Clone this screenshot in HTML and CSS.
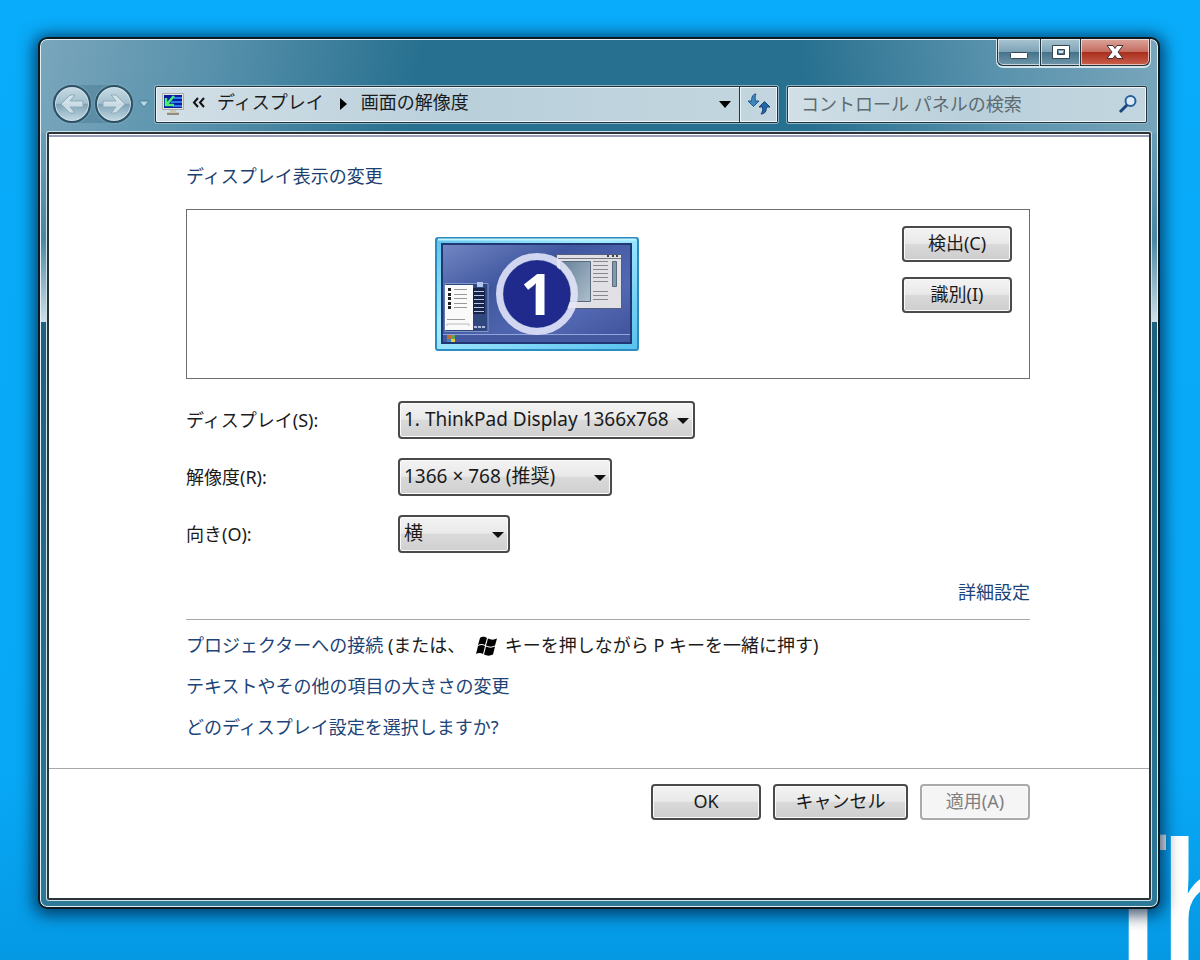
FILE: index.html
```
<!DOCTYPE html>
<html lang="ja">
<head>
  <meta charset="UTF-8">
  <meta name="viewport" content="width=device-width, initial-scale=1.0">
  <title>画面の解像度</title>
  <link rel="stylesheet" href="styles.css">
</head>
<body>
  <div class="wallpaper" aria-hidden="true">
    <span class="letter letter-t">T</span>
    <span class="letter letter-h">h</span>
  </div>

  <div class="window">
    <header>
      <div class="captions">
        <button type="button" class="cap cap-min" aria-label="最小化">
          <svg width="20" height="16" viewBox="0 0 20 16"><rect x="1.5" y="8.5" width="17" height="6" rx="1" fill="#fff" stroke="#344854"/></svg>
        </button>
        <button type="button" class="cap cap-max" aria-label="最大化">
          <svg width="20" height="16" viewBox="0 0 20 16"><path fill="#fff" fill-rule="evenodd" stroke="#344854" d="M1.500 1.500h17v13h-17zM6.500 5.500h7v5h-7z"/><path d="M8 8h4" stroke="#dbe7ee" stroke-width="2"/></svg>
        </button>
        <button type="button" class="cap cap-close" aria-label="閉じる">
          <svg width="20" height="16" viewBox="0 0 20 16"><path fill="#fff" stroke="#4c3034" d="M2 1.500h6l2 3 2-3h6l-5 6.500 5 6.500h-6l-2-3-2 3H2L7 8z"/></svg>
        </button>
      </div>

      <div class="toolbar">
        <div class="history">
          <button type="button" class="round" aria-label="戻る">
            <svg width="26" height="24" viewBox="0 0 26 24"><path fill="#dbe7ed" fill-opacity=".8" stroke="#8fabba" d="M2 12l9-9h5l-5 6h13v6H11l5 6h-5z"/></svg>
          </button>
          <button type="button" class="round" aria-label="進む">
            <svg width="26" height="24" viewBox="0 0 26 24"><path fill="#dbe7ed" fill-opacity=".8" stroke="#8fabba" d="M24 12l-9-9h-5l5 6H2v6h13l-5 6h5z"/></svg>
          </button>
        </div>
        <button type="button" class="recent" aria-label="最近のページ">
          <svg width="12" height="8" viewBox="0 0 12 8"><path fill="#b5d6e4" stroke="#4d7f98" d="M1 1h10L6 7z"/></svg>
        </button>

        <nav class="address">
          <svg class="monitor" width="22" height="23" viewBox="0 0 22 23">
            <path fill="#e6e4dc" stroke="#aaa" d="M.5.500h21v16H.5z"/>
            <path fill="#0a1c9c" d="M2 2h18v13H2z"/>
            <path stroke="#2c7cf0" stroke-width="2" d="M12 5h8M9 9h11M11 13h9"/>
            <path fill="none" stroke="#4af07c" stroke-width="2.500" d="M12 3L5 11M4 5v7h8"/>
            <path fill="#c8c6b8" d="M8 17h6v2h3v3H5v-3h3z"/>
            <path fill="#918e80" d="M5 20h12v2H5z"/>
          </svg>
          <svg class="chevrons" width="13" height="11" viewBox="0 0 13 11"><path fill="none" stroke="#111" stroke-width="2" d="M6 1L2 5.500 6 10M12 1L8 5.500l4 4.500"/></svg>
          <a href="#" class="crumb">ディスプレイ</a>
          <svg class="crumb-arrow" width="7" height="12" viewBox="0 0 7 12"><path d="M0 0l7 6-7 6z"/></svg>
          <a href="#" class="crumb">画面の解像度</a>
          <button type="button" class="address-drop" aria-label="以前の場所">
            <svg width="12" height="7" viewBox="0 0 12 7"><path d="M0 0h12L6 7z"/></svg>
          </button>
          <button type="button" class="refresh" aria-label="更新">
            <svg width="24" height="22" viewBox="0 0 24 22">
              <path fill="#3f86bd" stroke="#1f5791" d="M9 1C6 1 4.500 4 4.500 8H1l5.500 5.500L12 8H8.500C8 5 8 3 9 1z"/>
              <path fill="#2366a8" stroke="#174579" d="M14 21c4 0 5.500-3 5.500-7H23l-5.500-5.500L12 14h3.500c.5 3 0 5-1.500 7z"/>
            </svg>
          </button>
        </nav>

        <form class="search">
          <input type="text" aria-label="コントロール パネルの検索" placeholder="コントロール パネルの検索">
          <button type="button" aria-label="検索">
            <svg width="20" height="20" viewBox="0 0 20 20"><circle cx="12.500" cy="7" r="5" fill="#dcebf5" stroke="#24609c" stroke-width="2"/><path d="M9 11l-7 7" stroke="#16457f" stroke-width="3"/></svg>
          </button>
        </form>
      </div>
    </header>

    <main class="client">
      <div class="content">
        <h1>ディスプレイ表示の変更</h1>

        <section class="preview">
          <svg class="screen" width="204" height="114" viewBox="0 0 204 114" role="img" aria-label="ディスプレイ 1">
            <defs>
              <linearGradient id="edge" x1="0" y1="0" x2="1" y2="1">
                <stop offset="0" stop-color="#5fc3ec"/>
                <stop offset=".4" stop-color="#a5ebff"/>
                <stop offset="1" stop-color="#58c1ee"/>
              </linearGradient>
              <linearGradient id="desk" x1="0" y1="0" x2="1" y2="1">
                <stop offset="0" stop-color="#7387c2"/>
                <stop offset=".35" stop-color="#4057a0"/>
                <stop offset=".7" stop-color="#5368b2"/>
                <stop offset="1" stop-color="#3d5199"/>
              </linearGradient>
              <linearGradient id="pane" x1="0" y1="0" x2="1" y2="1">
                <stop offset="0" stop-color="#66809b"/>
                <stop offset="1" stop-color="#aebfca"/>
              </linearGradient>
            </defs>
            <rect x="1" y="1" width="202" height="112" rx="2" fill="url(#edge)" stroke="#2c8cc0" stroke-width="2"/>
            <path d="M3 2.500h198" stroke="#c2f3ff" stroke-width="2"/>
            <rect x="7" y="7" width="189" height="99" fill="url(#desk)" stroke="#1f3874" stroke-width="2"/>
            <path d="M8 97.500h187" stroke="#91a5da"/>
            <path fill="#4459a0" d="M8 98h187v7H8z"/>
            <path fill="#c66a3a" d="M12 98h4v4h-4z"/><path fill="#63a54c" d="M16 98h4v4h-4z"/><path fill="#3c86ba" d="M12 102h4v3h-4z"/><path fill="#e4cc48" d="M16 102h4v3h-4z"/>
            <path fill="#30467f" stroke="#8298c8" d="M10 46.500h43v48H10z"/>
            <path fill="#b6c6ea" d="M42 45h6v5h-6z"/>
            <path fill="#16244c" d="M37 51h13v26H37z"/>
            <path stroke="#b9c6e0" d="M39 54.500h10M39 58.500h10M39 62.500h10M39 66.500h10M39 70.500h10M39 74.500h10"/>
            <path stroke="#aebddd" stroke-width="2" d="M39 90h12" stroke-dasharray="3 1"/>
            <path fill="#fafafa" d="M10 48h28v45H10z"/>
            <path fill="#222" d="M13 51h3v3h-3zM13 56h3v3h-3zM13 60h3v3h-3zM13 65h3v3h-3zM13 69h3v3h-3z"/>
            <path stroke="#999" d="M19 52.500h13M19 57.500h13M19 61.500h13M19 66.500h13M19 70.500h13M12 82.500h18"/>
            <path stroke="#bbb" fill="none" d="M12 89v-2h22v2"/>
            <path fill="#e1e0e5" stroke="#555d7e" d="M121.500 17.500h65v54h-65z"/>
            <path stroke="#77757d" d="M123 21.500h63"/>
            <path fill="#444" d="M172 18h2v2h-2zM177 18h2v2h-2zM181 18h2v2h-2z"/>
            <path fill="url(#pane)" stroke="#586b7f" d="M125.500 24.500h30v40h-30z"/>
            <path stroke="#888790" d="M158 24.500h15M158 28.500h15M158 32.500h15M158 36.500h15M158 40.500h15M158 44.500h15M158 54.500h15M158 58.500h15M158 62.500h15"/>
            <path fill="#8799a9" stroke="#586b7f" d="M177.500 24.500h4v25h-4z"/>
            <circle cx="102" cy="57" r="33.500" fill="#20298c"/>
            <circle cx="102" cy="57" r="37.500" fill="none" stroke="#e4e6fa" stroke-opacity=".88" stroke-width="7"/>
            <text class="screen-number" x="102" y="78" text-anchor="middle">1</text>
          </svg>
          <div class="preview-buttons">
            <button type="button" class="btn">検出(C)</button>
            <button type="button" class="btn">識別(I)</button>
          </div>
        </section>

        <form class="settings">
          <div class="row">
            <label for="display">ディスプレイ(S):</label>
            <span class="drop drop-display">
              <select id="display"><option>1. ThinkPad Display 1366x768</option></select>
            </span>
          </div>
          <div class="row">
            <label for="resolution">解像度(R):</label>
            <span class="drop drop-resolution">
              <select id="resolution"><option>1366 × 768 (推奨)</option></select>
            </span>
          </div>
          <div class="row">
            <label for="orientation">向き(O):</label>
            <span class="drop drop-orientation">
              <select id="orientation"><option>横</option></select>
            </span>
          </div>
        </form>

        <div class="advanced"><a href="#">詳細設定</a></div>

        <ul class="links">
          <li><a href="#">プロジェクターへの接続</a> (または、
            <svg class="winkey" width="22" height="20" viewBox="0 0 22 20"><path d="M4 2c3-2 5-1 7 0L9 9C7 8 5 7.500 2 9zM12 2.500c3 1.500 6 1.500 9 0L19 9.500c-3 1.500-6 1.500-9 0zM2 10c3-1.500 5-1 7 0l-2 8c-2-1.500-5-1.500-7 0zM10 10.500c3 1.500 6 1.500 9 0L17 18.500c-3 1.500-6 1.500-9 0z"/></svg>
            キーを押しながら P キーを一緒に押す)</li>
          <li><a href="#">テキストやその他の項目の大きさの変更</a></li>
          <li><a href="#">どのディスプレイ設定を選択しますか?</a></li>
        </ul>
      </div>

      <footer>
        <button type="button" class="btn">OK</button>
        <button type="button" class="btn btn-cancel">キャンセル</button>
        <button type="button" class="btn" disabled>適用(A)</button>
      </footer>
    </main>
  </div>
</body>
</html>
```
FILE: styles.css
```
* {
  box-sizing: border-box;
}
body {
  margin: 0;
  padding: 37px 40px 51px 38px;
  min-height: 100vh;
  display: flex;
  position: relative;
  overflow: hidden;
  background: linear-gradient(#09acfa, #08a8f6 80%, #0599e4);
  font-family: "Noto Sans", "Noto Sans CJK JP", sans-serif;
  font-size: 18px;
  line-height: 24px;
  color: #1b1b1b;
}
button, input, select {
  font: inherit;
  color: inherit;
  margin: 0;
}
button {
  padding: 0;
}
svg {
  display: block;
  flex: none;
}
a {
  color: #1c4478;
  text-decoration: none;
}

/* desktop behind the window */
.wallpaper {
  position: absolute;
  inset: 0;
  overflow: hidden;
}
.letter {
  position: absolute;
  overflow: hidden;
  font-family: "Liberation Sans", Arial, sans-serif;
  font-size: 200px;
  line-height: 200px;
  color: #fff;
}
.letter-t {
  right: 34px;
  bottom: -44px;
  width: 89px;
}
.letter-h {
  right: 0;
  bottom: -52px;
  width: 43px;
}

/* window frame */
.window {
  position: relative;
  flex: 1;
  display: flex;
  flex-direction: column;
  padding: 0 7px 7px;
  border: 2px solid #0c1a22;
  border-radius: 9px;
  background:
    linear-gradient(100deg, rgba(130, 172, 192, .9), rgba(110, 160, 185, .7) 15%, transparent 34%) 0 0 / 100% 94px no-repeat,
    linear-gradient(260deg, rgba(130, 172, 192, .9), rgba(110, 160, 185, .7) 15%, transparent 32%) 0 0 / 100% 94px no-repeat,
    linear-gradient(#27708f, #27708f) 0 0 / 100% 94px no-repeat,
    linear-gradient(#6a9eb8 94px, #4a87a3 200px, #cfe0e8 283px, #1d6080 283px, #2e7898);
  box-shadow: inset 0 0 0 1px #e3eff4, 0 2px 16px 4px rgba(0, 30, 60, .75);
}
header {
  padding: 0 1px;
}
.captions {
  display: flex;
  justify-content: flex-end;
}
.cap {
  height: 27px;
  display: flex;
  align-items: center;
  justify-content: center;
  border: 1px solid #24343d;
  border-top: 0;
  border-right: 0;
  background: linear-gradient(#a9c4d1, #7fa4b7 48%, #44718a 50%, #7097ab);
  box-shadow: inset 0 0 0 1px rgba(255, 255, 255, .6), 0 1px 0 1px #d5e5ec;
}
.cap-min {
  width: 43px;
  border-radius: 0 0 0 6px;
}
.cap-max {
  width: 40px;
}
.cap-close {
  width: 70px;
  border-right: 1px solid #24343d;
  border-radius: 0 0 6px 0;
  background: linear-gradient(#dca59b, #c56e62 48%, #a82c1c 50%, #c9604c);
}

/* navigation bar */
.toolbar {
  display: flex;
  align-items: center;
  padding: 19px 3px 10px 4px;
}
.history {
  display: flex;
  gap: 4px;
  padding: 0 1px;
  border-radius: 19px;
  background: rgba(60, 110, 135, .35);
}
.round {
  width: 38px;
  height: 38px;
  display: flex;
  align-items: center;
  justify-content: center;
  border: 2px solid #2d5164;
  border-radius: 50%;
  background: linear-gradient(#c6dae4, #a3c0ce 48%, #7ea3b6 50%, #c3d9e3);
  box-shadow: inset 0 0 0 1px #cfe0e8, 0 0 2px #a3cadb;
}
.recent {
  margin: 0 5px 0 4px;
  border: 0;
  background: none;
}
.address, .search {
  height: 37px;
  display: flex;
  align-items: center;
  border: 1px solid #24343d;
  border-radius: 2px;
  background: linear-gradient(90deg, #d2dfe6, #b9d0db 50%, #c3d6df);
  box-shadow: inset 0 0 0 1px #eef5f8, 0 0 0 1px #8ab5c8;
}
.address {
  flex: 1;
  padding-left: 6px;
  margin-right: 9px;
}
.chevrons {
  margin: 0 12px 4px 8px;
}
.crumb {
  color: #1b1b1b;
  white-space: nowrap;
  padding-bottom: 4px;
}
.crumb-arrow {
  margin: 0 14px 0 16px;
}
.address-drop {
  margin-left: auto;
  padding: 8px;
  border: 0;
  background: none;
}
.refresh {
  align-self: stretch;
  width: 38px;
  display: flex;
  align-items: center;
  justify-content: center;
  border: 0;
  border-left: 1px solid #24343d;
  background: none;
  box-shadow: inset 0 0 0 1px #eef5f8;
}
.search {
  width: 360px;
  padding: 0 8px 0 13px;
}
.search input {
  flex: 1;
  min-width: 0;
  padding: 0;
  border: 0;
  background: none;
}
.search input::placeholder {
  color: #5d6a70;
  opacity: 1;
}
.search button {
  border: 0;
  background: none;
}

/* client area */
.client {
  flex: 1;
  margin-top: -1px;
  border: 2px solid #2b3438;
  border-radius: 2px;
  background: #fff linear-gradient(#9a9cbc, #9a9cbc) 0 1px / 100% 2px no-repeat;
  box-shadow: 0 0 0 1px #cfe2ea;
}
.content {
  padding: 30px 119px 0 137px;
}
h1 {
  margin: 0 0 21px;
  font-size: 18px;
  font-weight: 400;
  color: #1c3f70;
}
.preview {
  display: flex;
  gap: 16px;
  min-height: 170px;
  padding: 16px 17px 27px 0;
  border: 1px solid #6e6e6e;
}
.screen {
  margin: 11px auto 0;
}
.screen-number {
  font-family: "Open Sans", "Noto Sans", sans-serif;
  font-size: 58px;
  font-weight: 700;
  fill: #fff;
}
.preview-buttons {
  display: flex;
  flex-direction: column;
  gap: 15px;
}
.btn {
  width: 110px;
  height: 36px;
  padding-bottom: 2px;
  border: 2px solid #4a4a4a;
  border-radius: 4px;
  background: linear-gradient(#f3f3f3, #e9e9e9 48%, #dadada 50%, #cdcdcd);
  box-shadow: inset 0 0 0 1px #fafafa;
}
.btn:disabled {
  border-color: #a9aaab;
  background: #f5f5f5;
  color: #808080;
}
.settings {
  display: flex;
  flex-direction: column;
  gap: 19px;
  margin-top: 22px;
}
.row {
  display: flex;
  align-items: center;
}
.row label {
  width: 212px;
}
.drop {
  position: relative;
}
.drop::after {
  content: "";
  position: absolute;
  right: 6px;
  top: 17px;
  border: 6px solid transparent;
  border-top-color: #111;
  border-bottom: 0;
  pointer-events: none;
}
.drop select {
  display: block;
  width: 100%;
  height: 38px;
  padding: 0 20px 2px 4px;
  appearance: none;
  border: 2px solid #4a4a4a;
  border-radius: 4px;
  background: linear-gradient(#f3f3f3, #e9e9e9 48%, #dadada 50%, #d0d0d0);
  box-shadow: inset 0 0 0 1px #fafafa;
  font-size: 19px;
}
.drop-display {
  width: 297px;
}
.drop-resolution {
  width: 214px;
}
.drop-orientation {
  width: 112px;
}
.advanced {
  margin-top: 27px;
  padding-bottom: 15px;
  border-bottom: 1px solid #a8a8a8;
  text-align: right;
}
.links {
  display: flex;
  flex-direction: column;
  gap: 17px;
  margin: 13px 0 0;
  padding: 0;
  list-style: none;
}
.winkey {
  display: inline-block;
  margin: 0 2px 0 6px;
  vertical-align: -4px;
}
footer {
  display: flex;
  justify-content: flex-end;
  gap: 12px;
  margin-top: 29px;
  padding: 15px 119px 15px;
  border-top: 1px solid #a8a8a8;
}
.btn-cancel {
  width: 135px;
}
```
